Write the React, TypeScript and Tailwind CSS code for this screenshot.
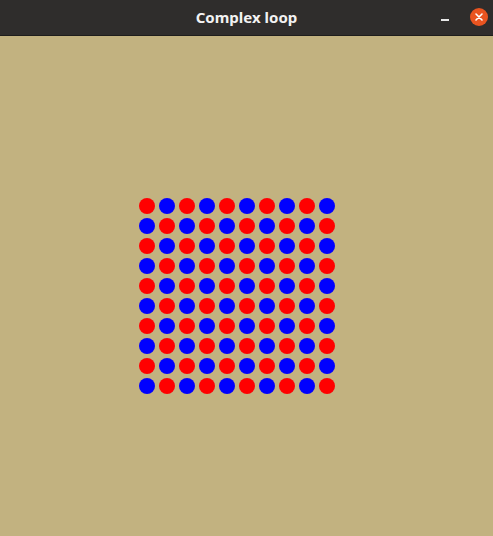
import React from "react";

export default function App() {
  const cells = [];
  for (let j = 0; j < 10; j++) {
    for (let i = 0; i < 10; i++) {
      cells.push(
        <div
          key={`${i}-${j}`}
          className={`w-4 h-4 rounded-full ${(i + j) % 2 === 0 ? "bg-[#ff0000]" : "bg-[#0000ff]"}`}
        />
      );
    }
  }
  return (
    <div className="w-[493px] h-[536px] flex flex-col bg-[#c2b280] overflow-hidden">
      <div className="h-[36px] shrink-0 bg-[#2f2d2c] border-b border-[#1e1d1c] relative flex items-center justify-center">
        <span
          className="text-[15px] font-bold text-[#f2f2f2]"
          style={{ fontFamily: '"Noto Sans", "Open Sans", sans-serif' }}
        >
          Complex loop
        </span>
        <div className="absolute left-[441px] top-[19px] w-[8px] h-[1.5px] bg-[#e8e8e8]" />
        <div className="absolute left-[470px] top-[8px] w-[18px] h-[18px] rounded-full bg-[#e95420] flex items-center justify-center">
          <svg width="10" height="10" viewBox="0 0 10 10">
            <path d="M2 2 L8 8 M8 2 L2 8" stroke="#ffffff" strokeWidth="1.6" strokeLinecap="round" />
          </svg>
        </div>
      </div>
      <div className="pl-[139px] pt-[162px]">
        <div className="grid grid-cols-[repeat(10,16px)] gap-[4px]">{cells}</div>
      </div>
    </div>
  );
}
